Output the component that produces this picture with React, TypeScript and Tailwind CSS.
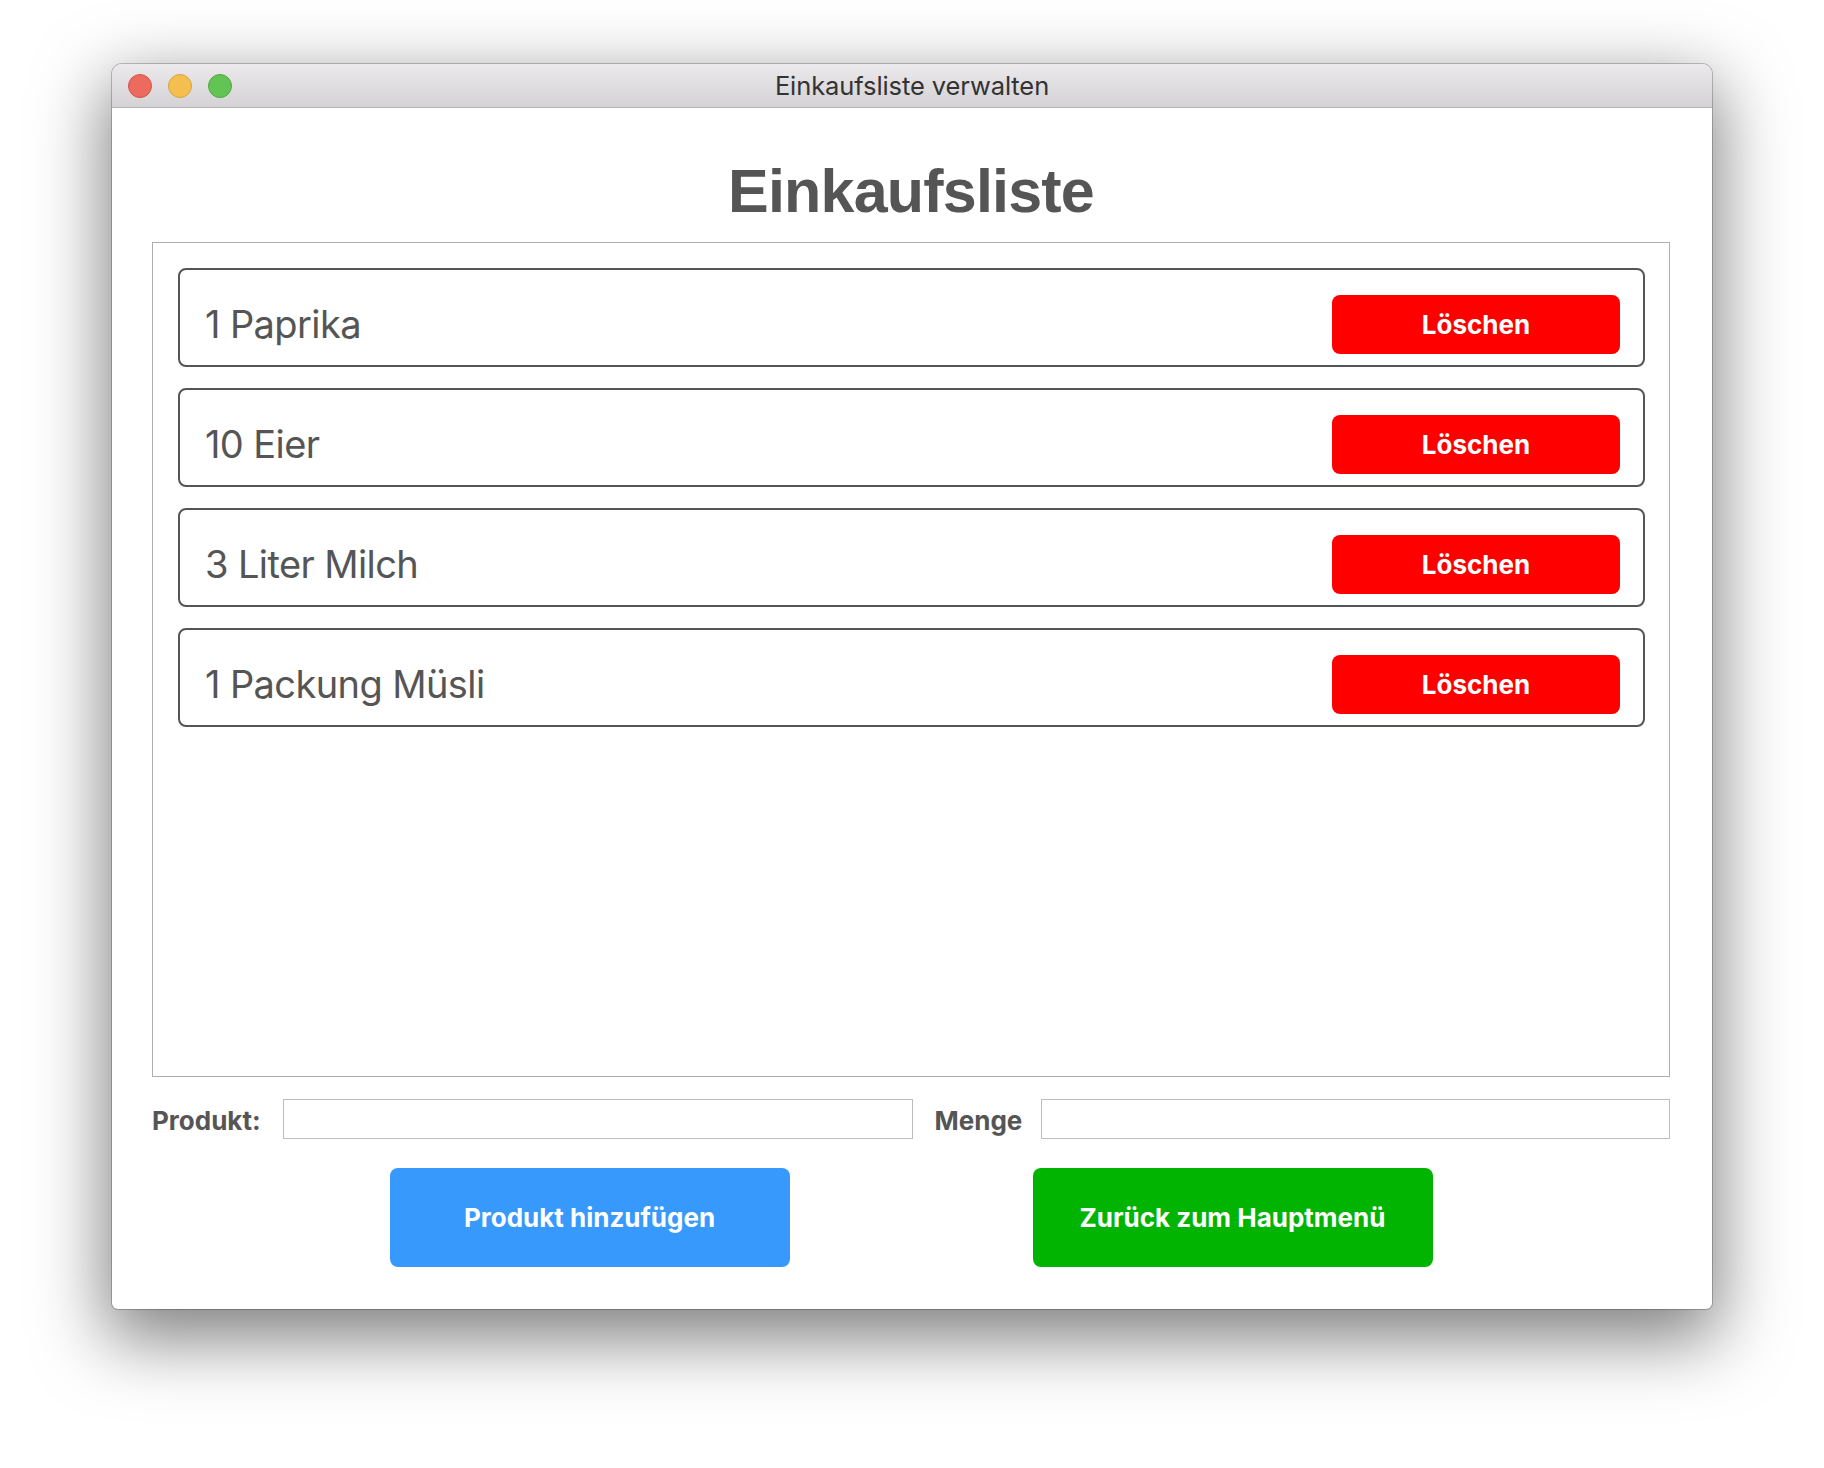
const items = ["1 Paprika", "10 Eier", "3 Liter Milch", "1 Packung Müsli"];

function TrafficLights() {
  return (
    <div className="flex items-center gap-4 pl-4">
      <span className="w-6 h-6 rounded-full bg-[#ed6a5e] border border-[#d2534a]" />
      <span className="w-6 h-6 rounded-full bg-[#f5bf4f] border border-[#d6a243]" />
      <span className="w-6 h-6 rounded-full bg-[#61c454] border border-[#51a73e]" />
    </div>
  );
}

function ItemRow({ label }: { label: string }) {
  return (
    <div className="flex items-center justify-between h-[99px] border-2 border-[#555] rounded-[8px] pl-[25px] pr-[23px] pt-[25px] pb-[11px]">
      <span className="font-['Inter',sans-serif] text-[38px] tracking-[-0.6px] text-[#555]">
        {label}
      </span>
      <button className="w-[288px] h-[59px] bg-[#ff0000] rounded-[8px] text-white font-['Inter',sans-serif] font-bold text-[26px]">
        Löschen
      </button>
    </div>
  );
}

export default function App() {
  return (
    <div className="min-h-[1468px] bg-white pt-[64px] pl-[112px]">
      <div className="w-[1600px] h-[1245px] bg-white rounded-t-[10px] rounded-b-[6px] overflow-hidden shadow-[0_0_0_1px_rgba(0,0,0,0.22),0_24px_70px_6px_rgba(0,0,0,0.5)] flex flex-col">
        {/* title bar */}
        <div className="relative h-[44px] shrink-0 flex items-center bg-gradient-to-b from-[#ebe9eb] to-[#d4d2d4] border-b border-[#b1b1b1]">
          <TrafficLights />
          <div className="absolute inset-0 pt-[2px] flex items-center justify-center font-['Inter',sans-serif] text-[25.5px] tracking-[-0.1px] text-[#333]">
            Einkaufsliste verwalten
          </div>
        </div>

        <div className="flex flex-col pl-[40px] pr-[42px] pt-[53px]">
          <h1 className="text-center font-['Liberation_Sans',Arial,sans-serif] font-bold text-[61px] leading-[61px] tracking-[-0.8px] text-[#555]">
            Einkaufsliste
          </h1>

          <div className="mt-[20px] h-[835px] border border-[#aeaeae] pl-[25px] pr-[24px] pt-[25px] flex flex-col gap-[21px]">
            {items.map((it) => (
              <ItemRow key={it} label={it} />
            ))}
          </div>

          <div className="mt-[21px] flex items-center font-['Inter',sans-serif] font-bold text-[26px] text-[#555]">
            <label className="w-[110px] pt-[3px]">Produkt:</label>
            <input className="ml-[21px] flex-1 h-[40px] border border-[#bdbdbd] outline-none" />
            <label className="ml-[22px] w-[86px] pt-[3px]">Menge</label>
            <input className="ml-[20px] flex-1 h-[40px] border border-[#bdbdbd] outline-none" />
          </div>

          <div className="mt-[28px] flex justify-center gap-[243px] font-['Inter',sans-serif] font-bold text-[26px] text-white">
            <button className="w-[400px] h-[99px] rounded-[8px] bg-[#3899fd]">
              Produkt hinzufügen
            </button>
            <button className="w-[400px] h-[99px] rounded-[8px] bg-[#02b402]">
              Zurück zum Hauptmenü
            </button>
          </div>
        </div>
      </div>
    </div>
  );
}
